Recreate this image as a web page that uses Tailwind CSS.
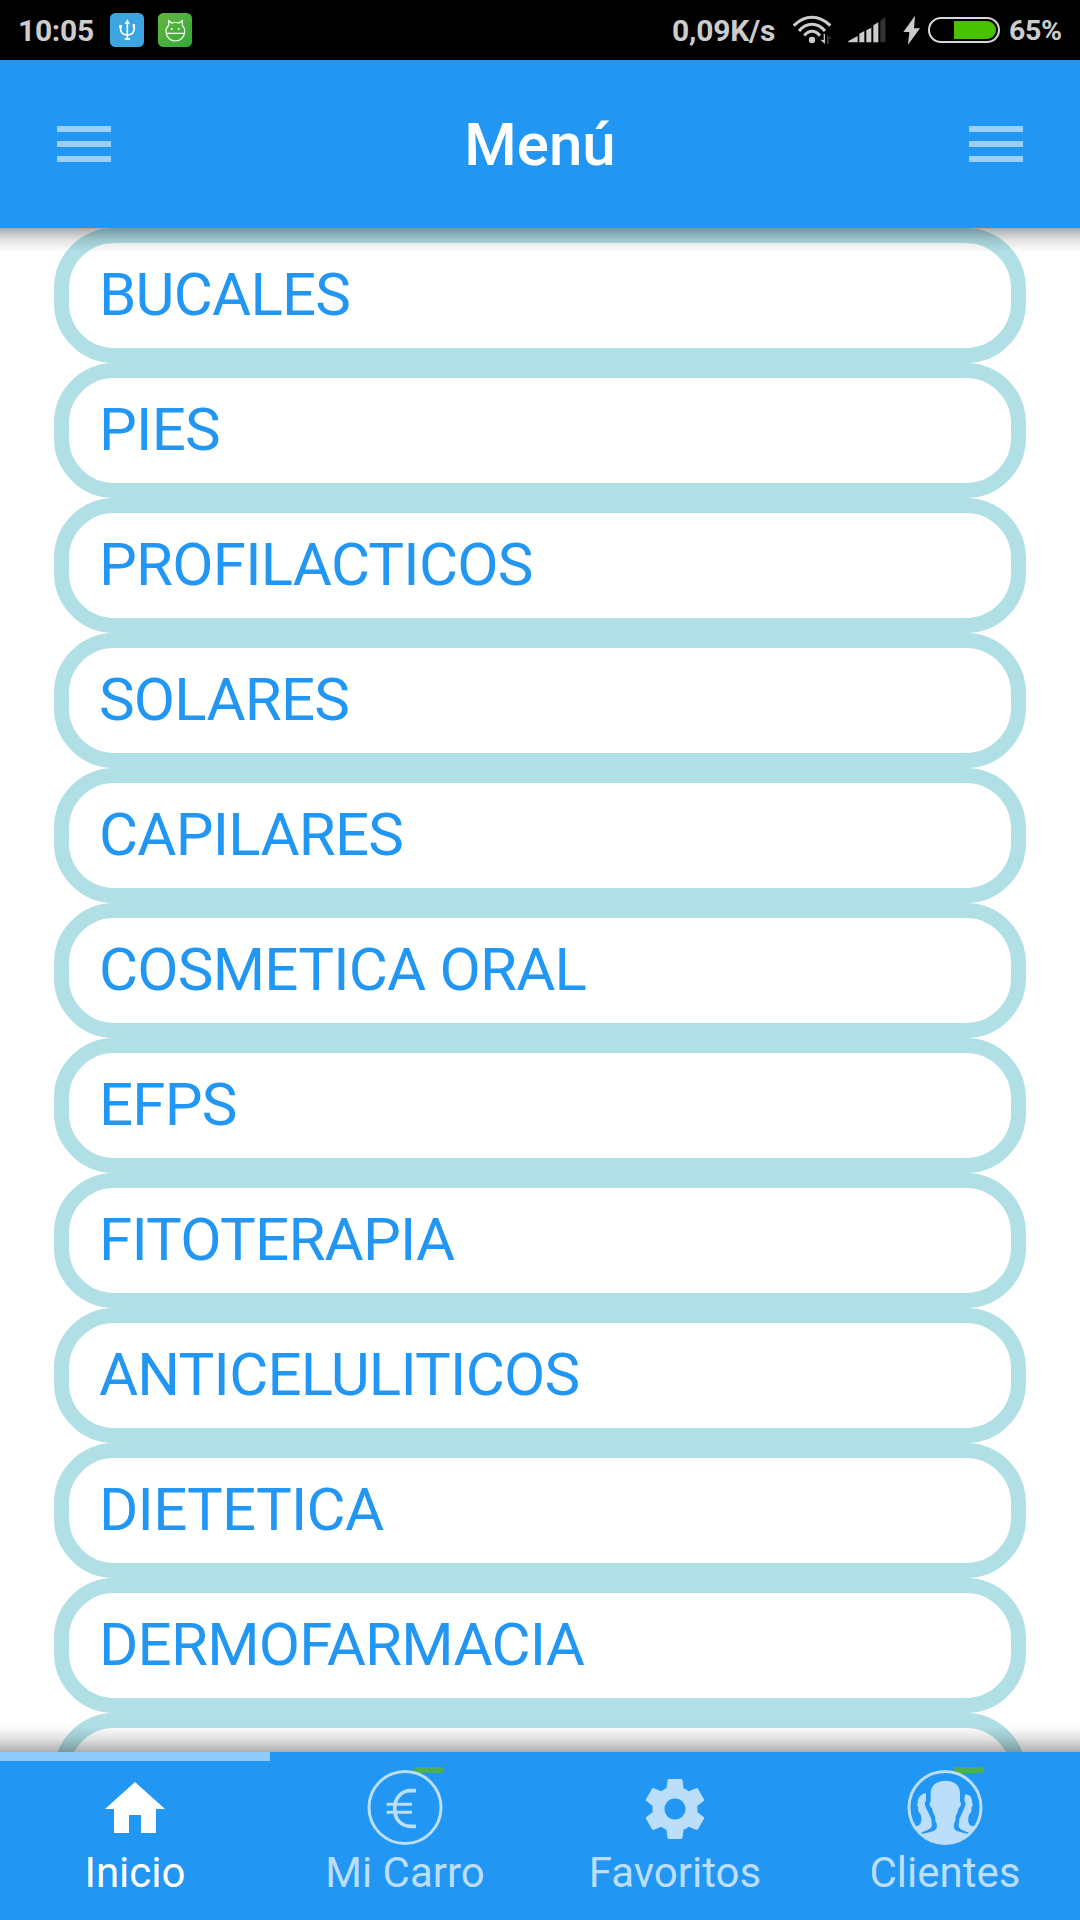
<!DOCTYPE html>
<html lang="es">
  <head>
    <meta charset="UTF-8" />
    <meta name="viewport" content="width=device-width, initial-scale=1.0" />
    <title>Menú</title>
    <script src="https://cdn.jsdelivr.net/npm/@tailwindcss/browser@4"></script>
  </head>
  <body class="bg-white font-[Roboto,sans-serif]">
    <div class="flex flex-col w-[1080px] h-[1920px] overflow-hidden">
      <!-- Status bar -->
      <div class="flex items-center h-[60px] shrink-0 bg-black text-[#cccccc] font-bold text-[30px] leading-[60px]">
        <div class="w-[92px] ml-[18px] pt-[2px] tracking-[-0.3px] whitespace-nowrap">10:05</div>
        <svg class="w-[34px] h-[34px] shrink-0" viewBox="330 39 102 102">
          <rect x="330" y="39" width="102" height="102" rx="16" fill="#3da5e0" />
          <path d="M382 66v50M361 80c0 18 6 25 21 25s21-7 21-25" fill="none" stroke="#fff" stroke-width="5" />
          <path d="M382 58l8 14h-16zM357 75h9v9h-9zM398 72h7v11h-7zM374 115h16v5h-16z" fill="#fff" />
        </svg>
        <svg class="w-[34px] h-[34px] shrink-0 ml-[14px]" viewBox="474 39 102 102">
          <defs>
            <linearGradient id="g" x1="0" y1="0" x2="1" y2="1">
              <stop offset="0" stop-color="#63b63e" />
              <stop offset="1" stop-color="#33aa3a" />
            </linearGradient>
          </defs>
          <rect x="474" y="39" width="102" height="102" rx="16" fill="url(#g)" />
          <path d="M506 76v-14l9 7q11-3 22 0l10-7v14q8 8 7 20c-1 16-13 27-28 27s-27-11-28-27q-1-12 8-20zM499 100h54" fill="none" stroke="#fff" stroke-width="3.500" />
          <circle cx="515" cy="87" r="3" fill="#fff" />
          <circle cx="536" cy="87" r="3" fill="#fff" />
        </svg>
        <div class="ml-auto w-[121px] pt-[2px] tracking-[-0.2px] whitespace-nowrap">0,09K/s</div>
        <svg class="w-[40px] h-[30px] shrink-0" viewBox="459 45 120 90">
          <g fill="none" stroke="#cccccc" stroke-width="9">
            <path d="M461 77Q487 52 516 52T571 77" />
            <path d="M477 93Q494 73 516 73T555 93" />
            <path d="M493 107Q503 94 516 94T540 107" />
          </g>
          <circle cx="516" cy="120" r="9.5" fill="#cccccc" />
          <path d="M541 119l10 1v-18h4v30z" fill="#cccccc" />
          <path d="M561 132v-29l14 13h-8v16z" fill="#333333" />
        </svg>
        <svg class="w-[38px] h-[26px] shrink-0 ml-[15px]" viewBox="626 53 114 78">
          <path d="M627 129v-4l28-15v19zM660 129v-26l15-8v34zM681 129v-36l15-8v44zM702 129v-51l15-9v60z" fill="#cccccc" />
          <path d="M723 129v-65l15-10v75z" fill="#333333" />
        </svg>
        <svg class="w-[18px] h-[30px] shrink-0 ml-[17px]" viewBox="790 45 54 90">
          <path d="M826 47l-35 49h18l-4 38 36-49h-18z" fill="#cccccc" />
        </svg>
        <div class="flex w-[72px] h-[26px] shrink-0 ml-[7px] border-2 border-[#d8d8d8] rounded-full p-[2px]">
          <div class="w-[42px] ml-auto bg-[#48c200] rounded-r-full"></div>
        </div>
        <div class="w-[71px] ml-[9px] pt-[2px] text-[28.5px] tracking-[-0.4px] whitespace-nowrap">65%</div>
      </div>

      <!-- Header -->
      <header class="flex items-center justify-between h-[168px] shrink-0 px-[57px] bg-[#2196f3]">
        <div class="flex flex-col gap-[9px]">
          <div class="w-[54px] h-[6px] bg-white/55"></div>
          <div class="w-[54px] h-[6px] bg-white/55"></div>
          <div class="w-[54px] h-[6px] bg-white/55"></div>
        </div>
        <h1 class="pt-[2px] text-white text-[60px] leading-[70px] font-medium">Menú</h1>
        <div class="flex flex-col gap-[9px]">
          <div class="w-[54px] h-[6px] bg-white/55"></div>
          <div class="w-[54px] h-[6px] bg-white/55"></div>
          <div class="w-[54px] h-[6px] bg-white/55"></div>
        </div>
      </header>

      <!-- Category list -->
      <main class="relative h-[1524px] shrink-0 overflow-hidden px-[54px] text-[#2196f3] text-[60px] leading-[103px] tracking-[-0.77px]">
        <div class="h-[135px] border-[15px] border-[#b0dfe5] rounded-[60px] pl-[30px]">BUCALES</div>
        <div class="h-[135px] border-[15px] border-[#b0dfe5] rounded-[60px] pl-[30px]">PIES</div>
        <div class="h-[135px] border-[15px] border-[#b0dfe5] rounded-[60px] pl-[30px]">PROFILACTICOS</div>
        <div class="h-[135px] border-[15px] border-[#b0dfe5] rounded-[60px] pl-[30px]">SOLARES</div>
        <div class="h-[135px] border-[15px] border-[#b0dfe5] rounded-[60px] pl-[30px]">CAPILARES</div>
        <div class="h-[135px] border-[15px] border-[#b0dfe5] rounded-[60px] pl-[30px]">COSMETICA ORAL</div>
        <div class="h-[135px] border-[15px] border-[#b0dfe5] rounded-[60px] pl-[30px]">EFPS</div>
        <div class="h-[135px] border-[15px] border-[#b0dfe5] rounded-[60px] pl-[30px]">FITOTERAPIA</div>
        <div class="h-[135px] border-[15px] border-[#b0dfe5] rounded-[60px] pl-[30px]">ANTICELULITICOS</div>
        <div class="h-[135px] border-[15px] border-[#b0dfe5] rounded-[60px] pl-[30px]">DIETETICA</div>
        <div class="h-[135px] border-[15px] border-[#b0dfe5] rounded-[60px] pl-[30px]">DERMOFARMACIA</div>
        <div class="h-[135px] border-[15px] border-[#b0dfe5] rounded-[60px]"></div>
        <!-- shadows of the bars over the list -->
        <div class="absolute inset-x-0 top-0 h-[24px] bg-linear-to-b from-black/33 via-black/11 to-transparent"></div>
        <div class="absolute inset-x-0 bottom-0 h-[26px] bg-linear-to-t from-black/32 via-black/12 to-transparent"></div>
      </main>

      <!-- Bottom tabs -->
      <nav class="grid grid-cols-4 h-[168px] shrink-0 bg-[#2196f3] text-[#bbdefb] text-[42px] leading-[48px]">
        <div class="flex flex-col items-center text-white">
          <div class="w-full h-[9px] bg-[#90caf9]"></div>
          <div class="flex items-end h-[75px] mt-[9px]">
            <svg class="w-[72px] h-[72px]" viewBox="0 0 24 24" fill="currentColor">
              <path d="M10 20v-6h4v6h5v-8h3L12 3 2 12h3v8z" />
            </svg>
          </div>
          <span class="mt-1">Inicio</span>
        </div>
        <div class="flex flex-col items-center pt-[18px]">
          <div class="relative w-[76px] h-[75px]">
            <div class="absolute left-[47px] -top-[3px] w-[30px] h-[6px] rounded-[2px] bg-[#4caf50]"></div>
            <svg class="relative w-[76px] h-[75px]" viewBox="291 90 228 225" fill="none" stroke="currentColor">
              <circle cx="405" cy="202.500" r="108" stroke-width="9" />
              <path d="M438 152h-15c-30 0-49 22-49 54s19 53 49 53h15" stroke-width="11" />
              <path d="M350 193h76M350 217h76" stroke-width="9" />
            </svg>
          </div>
          <span class="mt-1">Mi Carro</span>
        </div>
        <div class="flex flex-col items-center pt-[18px]">
          <div class="flex items-end h-[75px]">
            <svg class="w-[72px] h-[72px]" viewBox="0 0 24 24" fill="currentColor">
              <path d="M19.430 12.980c.04-.32.070-.64.070-.98s-.03-.66-.07-.98l2.110-1.650c.19-.15.240-.42.120-.64l-2-3.460c-.12-.22-.39-.3-.61-.22l-2.490 1c-.52-.4-1.080-.73-1.690-.98l-.38-2.650C14.460 2.180 14.250 2 14 2h-4c-.25 0-.46.180-.49.420l-.38 2.650c-.61.250-1.170.590-1.690.980l-2.490-1c-.23-.09-.49 0-.61.220l-2 3.460c-.13.220-.07.490.120.640l2.110 1.650c-.04.320-.07.650-.07.980s.030.660.070.980l-2.110 1.650c-.19.150-.24.420-.12.640l2 3.460c.12.220.390.300.610.220l2.490-1c.52.400 1.080.730 1.690.980l.38 2.650c.03.240.240.420.490.420h4c.25 0 .46-.18.490-.42l.38-2.650c.61-.25 1.170-.59 1.690-.98l2.490 1c.23.090.490 0 .610-.22l2-3.460c.12-.22.070-.49-.12-.64l-2.110-1.650zM12 15.500c-1.930 0-3.500-1.570-3.500-3.500s1.570-3.500 3.500-3.500 3.500 1.570 3.500 3.500-1.570 3.500-3.500 3.500z" />
            </svg>
          </div>
          <span class="mt-1">Favoritos</span>
        </div>
        <div class="flex flex-col items-center pt-[18px]">
          <div class="relative w-[76px] h-[75px]">
            <div class="absolute left-[47px] -top-[3px] w-[30px] h-[6px] rounded-[2px] bg-[#4caf50]"></div>
            <svg class="relative w-[76px] h-[75px]" viewBox="6 15 228 225" fill="currentColor">
              <circle cx="120" cy="127.500" r="108" fill="none" stroke="currentColor" stroke-width="9" />
              <path d="M122 47c27 0 43 15 43 38v25c5 1 3 16-4 19-2 12-6 19-9 25l-1 14c-5 6-5 14-4 20 2 9 12 12 44 19-18 20-42 31-71 31s-53-11-70-31c32-7 42-10 45-19 2-7 1-14-4-20l-1-14c-3-6-7-13-9-25-7-3-9-18-4-19V85c0-23 17-38 45-38z" />
              <path d="M63 84c-16 4-25 14-25 31l-2 6 3 4 1 14 7 9c3 12 4 22-2 30-4 6-11 6-21 4 6 8 12 15 21 22l18-7c14-5 20-10 17-22l-1-13-7-15-10-20-3-12 4-9z" />
              <path d="M180 88c15 1 22 9 21 24l3 9-4 5-1 14-7 9c-3 12-4 21 1 29 4 6 12 6 21 4-6 8-12 15-20 22l-18-7c-13-5-17-11-14-22l1-13 7-15 9-20 3-12-4-9z" />
            </svg>
          </div>
          <span class="mt-1">Clientes</span>
        </div>
      </nav>
    </div>
  </body>
</html>
